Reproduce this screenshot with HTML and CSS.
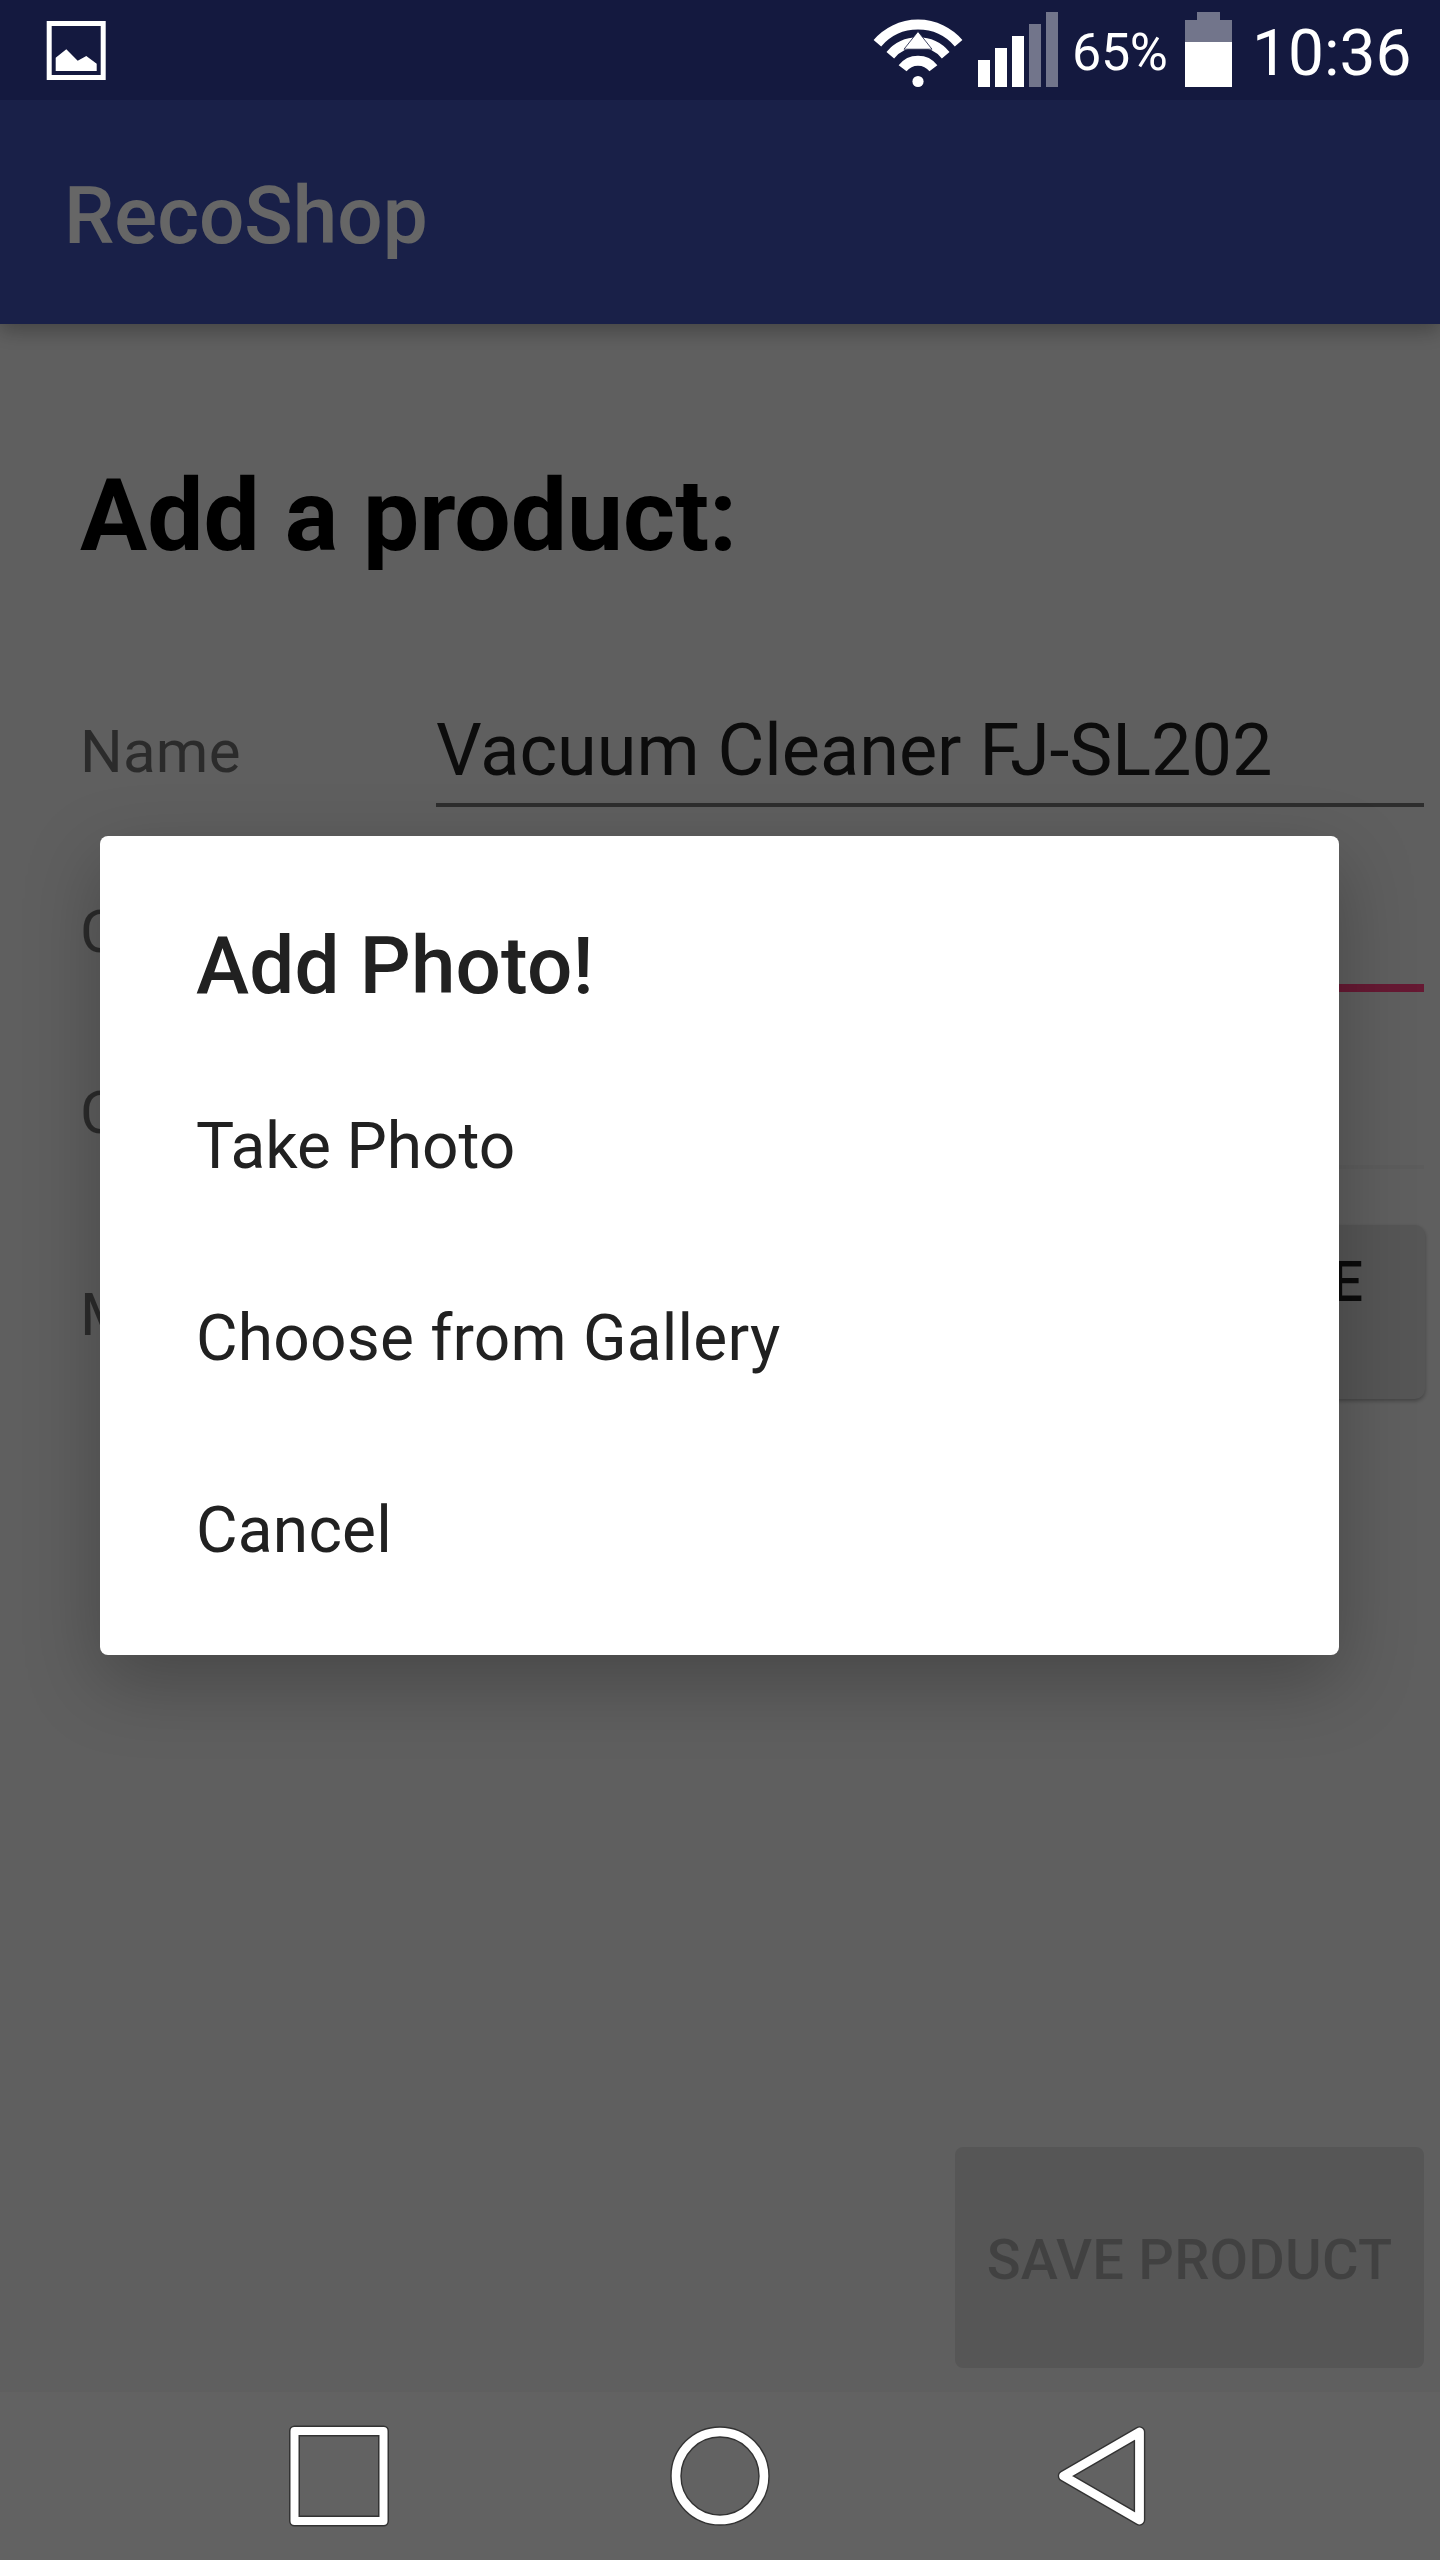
FILE: index.html
```html
<!DOCTYPE html>
<html lang="en">
<head>
<meta charset="utf-8">
<title>RecoShop</title>
<link rel="stylesheet" href="styles.css">
</head>
<body>
<div class="screen">
  <header class="status">
    <svg class="status-photo" width="60" height="60" viewBox="0 0 60 60">
      <rect x="3.2" y="2.5" width="54" height="54" fill="none" stroke="#fff" stroke-width="5"/>
      <path d="M9.7 36.8 20.3 28.3 31.7 39.7 40.3 35 50.7 42.7V50H9.7z" fill="#fff"/>
    </svg>
    <svg class="status-wifi" width="90" height="100" viewBox="873 0 90 100">
      <g fill="none" stroke="#fff" stroke-width="10">
        <path d="M877.4 43.2A53.6 53.6 0 0 1 958.6 43.2"/>
        <path d="M890.3 55.2A36.2 36.2 0 0 1 945.7 55.2"/>
        <path d="M902.6 68.2A19.5 19.5 0 0 1 933.4 68.2"/>
      </g>
      <circle cx="918" cy="81.5" r="5.6" fill="#fff"/>
      <path d="M918 31.5 904 49.2H932z" fill="#fff" stroke="#14193f" stroke-width=".8"/>
    </svg>
    <svg class="status-signal" width="80" height="100" viewBox="0 0 80 100">
      <g fill="#fff">
        <path d="M0 60h12v27H0zM17 48h12v39H17zM34 36h12v51H34z"/>
        <path d="M51 24h12v63H51zM68 12h12v75H68z" opacity=".4"/>
      </g>
    </svg>
    <span class="status-percent">65%</span>
    <svg class="status-battery" width="47" height="100" viewBox="0 0 47 100">
      <path d="M12 12h23v8h12v22H0V20h12z" fill="#fff" opacity=".4"/>
      <path d="M0 42h47v45H0z" fill="#fff"/>
    </svg>
    <span class="status-time">10:36</span>
  </header>

  <div class="toolbar">RecoShop</div>

  <main class="content">
    <h1 class="heading">Add a product:</h1>
    <div class="field">
      <span class="label">Name</span>
      <span class="input">Vacuum Cleaner FJ-SL202</span>
    </div>
    <div class="field field-active">
      <span class="label">C</span>
      <span class="input"></span>
    </div>
    <div class="field field-faint">
      <span class="label">C</span>
      <span class="input"></span>
    </div>
    <div class="field field-media">
      <span class="label">M</span>
      <span class="media-button">E</span>
    </div>
    <div class="save">SAVE PRODUCT</div>
  </main>

  <nav class="navbar">
    <svg width="104" height="104" viewBox="0 0 104 104">
      <rect x="7.5" y="7" width="89" height="90" fill="none" stroke="#333" stroke-width="11" stroke-linejoin="round"/>
      <rect x="7.5" y="7" width="89" height="90" fill="none" stroke="#fff" stroke-width="8" stroke-linejoin="round"/>
    </svg>
    <svg width="104" height="104" viewBox="0 0 104 104">
      <circle cx="52" cy="52" r="44" fill="none" stroke="#333" stroke-width="11.4"/>
      <circle cx="52" cy="52" r="44" fill="none" stroke="#fff" stroke-width="8.6"/>
    </svg>
    <svg width="104" height="104" viewBox="0 0 104 104">
      <path d="M90.5 8V96L14.5 52z" fill="none" stroke="#333" stroke-width="11.6" stroke-linejoin="round"/>
      <path d="M90.5 8V96L14.5 52z" fill="none" stroke="#fff" stroke-width="8.8" stroke-linejoin="round"/>
    </svg>
  </nav>

  <div class="scrim">
    <section class="dialog">
      <h2 class="dialog-title">Add Photo!</h2>
      <div class="dialog-item dialog-item-first">Take Photo</div>
      <div class="dialog-item">Choose from Gallery</div>
      <div class="dialog-item">Cancel</div>
    </section>
  </div>
</div>
</body>
</html>
```
FILE: styles.css
```css
* { box-sizing: border-box; }

body {
  margin: 0;
  font-family: Roboto, "Liberation Sans", sans-serif;
}

.screen {
  position: relative;
  width: 1440px;
  height: 2560px;
  display: flex;
  flex-direction: column;
  overflow: hidden;
  background: #eee;
}

.screen svg { display: block; flex: none; }

/* System bars stay above the scrim */
.status {
  position: relative;
  z-index: 3;
  flex: none;
  height: 100px;
  display: flex;
  align-items: center;
  background: #14193f;
  color: #fff;
  white-space: nowrap;
}

.status-photo { margin-left: 46px; margin-top: 2px; }
.status-wifi { margin-left: auto; }
.status-signal { margin-left: 15px; }
.status-percent {
  width: 113px;
  margin-left: 14px;
  padding-top: 5px;
  font-size: 52px;
  line-height: 60px;
  letter-spacing: -.3px;
}
.status-time {
  width: 183px;
  margin-left: 20px;
  margin-right: 5px;
  padding-top: 7px;
  font-size: 64px;
  line-height: 74px;
}

.toolbar {
  position: relative;
  z-index: 1;
  flex: none;
  height: 224px;
  padding: 8px 64px 0;
  background: #3f51b5;
  color: #fff;
  font-size: 80px;
  font-weight: 500;
  line-height: 216px;
  box-shadow: 0 6px 20px rgba(0, 0, 0, .3);
}

.content {
  flex: 1;
  display: flex;
  flex-direction: column;
  padding: 132px 16px 24px 80px;
}

.heading {
  margin: 0 0 120px;
  font-size: 100px;
  font-weight: 700;
  line-height: 120px;
  color: #000;
}

.field {
  display: grid;
  grid-template-columns: 356px 1fr;
  grid-template-rows: 100%;
  align-items: start;
  height: 111px;
  margin-bottom: 69px;
}

.label {
  font-size: 60px;
  line-height: 111px;
  letter-spacing: .2px;
  color: rgba(0, 0, 0, .54);
}

.input {
  height: 100%;
  border-bottom: 4px solid #717171;
  font-size: 72px;
  line-height: 109px;
  color: rgba(0, 0, 0, .87);
  white-space: nowrap;
}

.field-active { height: 116px; margin-bottom: 65px; }
.field-active .input { border-bottom: 8px solid #ff4081; }

.field-faint { height: 112px; margin-bottom: 56px; }
.field-faint .input { border-bottom-color: #e6e6e6; }

.field-media { height: 174px; margin: 0 -1px 0 0; }
.field-media .label { line-height: 179px; }

.media-button {
  height: 100%;
  padding: 24px 62px 0 0;
  border-radius: 10px;
  background: #d6d7d7;
  box-shadow: 0 2px 4px rgba(0, 0, 0, .3);
  color: rgba(0, 0, 0, .87);
  font-size: 56px;
  font-weight: 500;
  line-height: 66px;
  text-align: right;
}

.save {
  width: 469px;
  height: 221px;
  margin-top: auto;
  margin-left: auto;
  padding-top: 5px;
  border-radius: 8px;
  background: #d6d7d7;
  color: rgba(0, 0, 0, .24);
  font-size: 56px;
  font-weight: 500;
  line-height: 216px;
  letter-spacing: .2px;
  text-align: center;
  white-space: nowrap;
}

.navbar {
  position: relative;
  z-index: 3;
  flex: none;
  height: 168px;
  display: flex;
  align-items: center;
  justify-content: center;
  gap: 277px;
  background: #626262;
}

.scrim {
  position: absolute;
  inset: 0;
  z-index: 2;
  padding: 836px 101px 0 100px;
  background: rgba(0, 0, 0, .6);
}

.dialog {
  height: 819px;
  border-radius: 8px;
  background: #fff;
  color: #212121;
  box-shadow: 0 26px 75px rgba(0, 0, 0, .26);
}

.dialog-title {
  margin: 0;
  padding: 83px 96px 38px;
  font-size: 80px;
  font-weight: 500;
  line-height: 94px;
  letter-spacing: .15px;
}

.dialog-item {
  padding: 0 96px;
  font-size: 64px;
  line-height: 192px;
  letter-spacing: .2px;
}

.dialog-item-first { letter-spacing: -.1px; }
```
